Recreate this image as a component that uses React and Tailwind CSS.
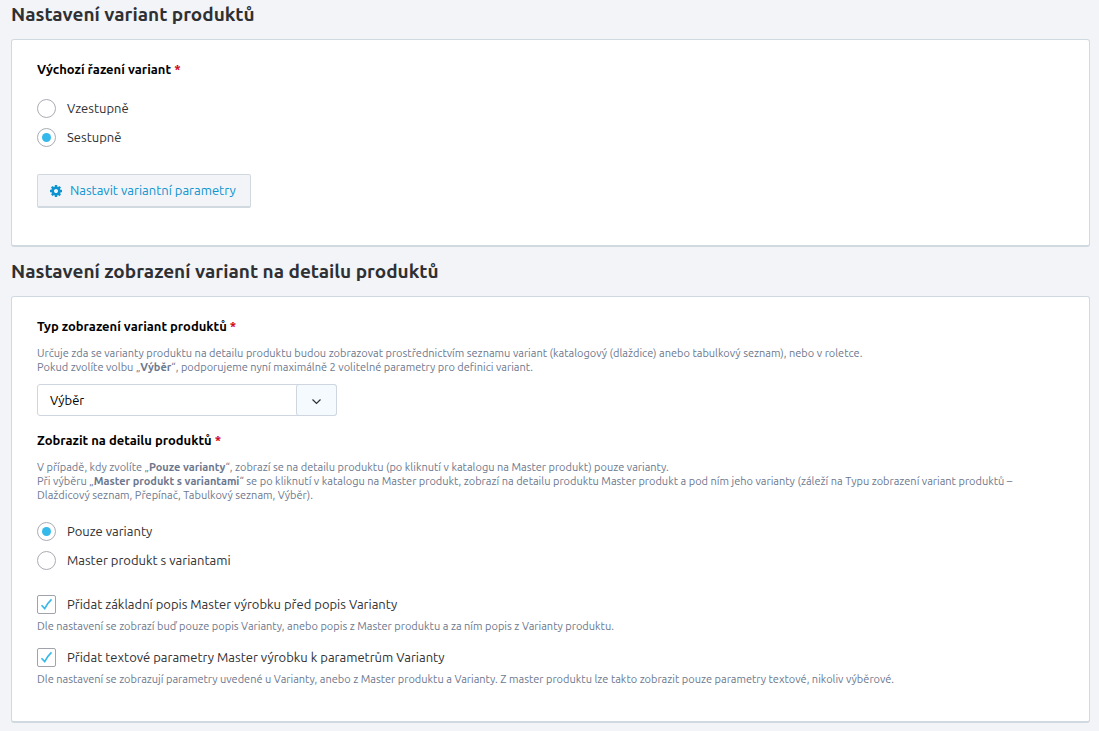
import React, { useState } from 'react';

const GearIcon = () => (
  <svg className="size-3 shrink-0 fill-[#0b94cf]" viewBox="0 128 1536 1536" aria-hidden="true">
    <path d="M1024 896q0-106-75-181t-181-75-181 75-75 181 75 181 181 75 181-75 75-181zm512-109v222q0 12-8 23t-20 13l-185 28q-19 54-39 91 35 50 107 138 10 12 10 25t-9 23q-27 37-99 108t-94 71q-12 0-26-9l-138-108q-44 23-91 38-16 136-29 186-7 28-36 28h-222q-14 0-24.5-8.5t-11.5-21.5l-28-184q-49-16-90-37l-141 107q-10 9-25 9-14 0-25-11-126-114-165-168-7-10-7-23 0-12 8-23 15-21 51-66.5t54-70.5q-27-50-41-99l-183-27q-13-2-21-12.5t-8-23.5v-222q0-12 8-23t19-13l186-28q14-46 39-92-40-57-107-138-10-12-10-24 0-10 9-23 26-36 98.5-107.5t94.5-71.5q13 0 26 10l138 107q44-23 91-38 16-136 29-186 7-28 36-28h222q14 0 24.5 8.5t11.5 21.5l28 184q49 16 90 37l142-107q9-9 24-9 13 0 25 10 129 119 165 170 7 8 7 22 0 12-8 23-15 21-51 66.5t-54 70.5q26 50 41 98l183 28q13 2 21 12.5t8 23.5z" />
  </svg>
);

const Section = ({ title, children }) => (
  <section>
    <h2 className="text-[19px] leading-7 font-semibold text-[#2f3033]">{title}</h2>
    <div className="mt-[11px] rounded-[3px] border border-b-2 border-[#d1d9e0] bg-white px-[25px] pt-5">
      {children}
    </div>
  </section>
);

const Required = () => <span className="text-[#d0021b]">*</span>;

const Hint = ({ id, children }) => (
  <p id={id} className="text-[11px] leading-[14px] text-[#6c788e]">{children}</p>
);

const Radio = ({ name, label, checked, onChange }) => (
  <label className="flex h-[19px] items-center gap-[11px]">
    <span className="grid size-[19px] shrink-0 place-items-center">
      <input
        type="radio"
        name={name}
        checked={checked}
        onChange={onChange}
        className="peer col-start-1 row-start-1 size-[19px] appearance-none rounded-full border border-[#a9acb3] bg-white"
      />
      <span className="pointer-events-none col-start-1 row-start-1 hidden size-[9px] rounded-full bg-[#35b8ea] peer-checked:block" />
    </span>
    {label}
  </label>
);

const Checkbox = ({ label, checked, onChange, hintId }) => (
  <label className="flex h-[19px] items-center gap-[11px]">
    <span className="grid size-[19px] shrink-0 place-items-center">
      <input
        type="checkbox"
        checked={checked}
        onChange={onChange}
        aria-describedby={hintId}
        className="peer col-start-1 row-start-1 size-[19px] appearance-none rounded-[2px] border border-[#a0a3ab] bg-white"
      />
      <svg
        className="pointer-events-none col-start-1 row-start-1 hidden size-[13px] peer-checked:block"
        viewBox="0 0 13 13"
        fill="none"
        stroke="#35b8ea"
        strokeWidth="1.6"
        aria-hidden="true"
      >
        <path d="M1.5 7.2L4.7 10.6C6.2 7.4 8.3 4.4 11.5 1.4" />
      </svg>
    </span>
    {label}
  </label>
);

const App = () => {
  const [order, setOrder] = useState('desc');
  const [display, setDisplay] = useState('variants');
  const [addDescription, setAddDescription] = useState(true);
  const [addParams, setAddParams] = useState(true);

  return (
    <div className="min-h-screen bg-[#f3f4f8] pr-[9px] pb-[9px] pl-[11px] font-['Ubuntu','Noto_Sans',sans-serif] text-[13px] leading-[19px] text-[#2f3033]">
      <Section title="Nastavení variant produktů">
        <fieldset>
          <legend className="font-bold text-black">Výchozí řazení variant <Required /></legend>
          <div className="flex flex-col gap-[10px] pt-5">
            <Radio name="order" label="Vzestupně" checked={order === 'asc'} onChange={() => setOrder('asc')} />
            <Radio name="order" label="Sestupně" checked={order === 'desc'} onChange={() => setOrder('desc')} />
          </div>
        </fieldset>
        <button
          type="button"
          className="mt-[27px] mb-[37px] flex h-[34px] items-center gap-2 rounded-[2px] border border-b-2 border-[#d1d9e0] bg-[#f3f4f8] pr-3.5 pl-3 text-[#0b94cf]"
        >
          <GearIcon />
          Nastavit variantní parametry
        </button>
      </Section>

      <div className="pt-[10px]">
        <Section title="Nastavení zobrazení variant na detailu produktů">
          <label htmlFor="variant-type" className="block font-bold text-black">
            Typ zobrazení variant produktů <Required />
          </label>
          <div className="pt-[10px] pb-[10px]">
            <Hint id="variant-type-hint">
              Určuje zda se varianty produktu na detailu produktu budou zobrazovat prostřednictvím seznamu variant (katalogový (dlaždice) anebo tabulkový seznam), nebo v roletce.
              <br />
              Pokud zvolíte volbu „<b>Výběr</b>“, podporujeme nyní maximálně 2 volitelné parametry pro definici variant.
            </Hint>
          </div>
          <div className="grid h-8 w-[300px] max-w-full">
            <select
              id="variant-type"
              aria-describedby="variant-type-hint"
              className="col-start-1 row-start-1 appearance-none rounded-[3px] border border-[#cfd6e0] bg-white pr-12 pl-3 text-black"
            >
              <option>Výběr</option>
              <option>Dlaždicový seznam</option>
              <option>Přepínač</option>
              <option>Tabulkový seznam</option>
            </select>
            <span className="pointer-events-none col-start-1 row-start-1 flex w-[41px] items-center justify-center justify-self-end rounded-[3px] border border-[#cfd6e0] bg-[#f4fafd]">
              <svg className="size-[9px]" viewBox="0 0 9 9" fill="none" stroke="#2f3033" strokeWidth="1.2" aria-hidden="true">
                <path d="M.5 3.5L4.5 7.5L8.5 3.5" />
              </svg>
            </span>
          </div>

          <fieldset className="pt-[15px]">
            <legend className="contents font-bold text-black">Zobrazit na detailu produktů <Required /></legend>
            <div className="pt-[10px]">
              <Hint>
                V případě, kdy zvolíte „<b>Pouze varianty</b>“, zobrazí se na detailu produktu (po kliknutí v katalogu na Master produkt) pouze varianty.
                <br />
                Při výběru „<b>Master produkt s variantami</b>“ se po kliknutí v katalogu na Master produkt, zobrazí na detailu produktu Master produkt a pod ním jeho varianty (záleží na Typu zobrazení variant produktů – Dlaždicový seznam, Přepínač, Tabulkový seznam, Výběr).
              </Hint>
            </div>
            <div className="flex flex-col gap-[10px] pt-5">
              <Radio name="display" label="Pouze varianty" checked={display === 'variants'} onChange={() => setDisplay('variants')} />
              <Radio name="display" label="Master produkt s variantami" checked={display === 'master'} onChange={() => setDisplay('master')} />
            </div>
          </fieldset>

          <div className="flex flex-col gap-[15px] pt-[25px] pb-[35px]">
            <div className="flex flex-col gap-[5px]">
              <Checkbox
                label="Přidat základní popis Master výrobku před popis Varianty"
                hintId="description-hint"
                checked={addDescription}
                onChange={(e) => setAddDescription(e.target.checked)}
              />
              <Hint id="description-hint">
                Dle nastavení se zobrazí buď pouze popis Varianty, anebo popis z Master produktu a za ním popis z Varianty produktu.
              </Hint>
            </div>
            <div className="flex flex-col gap-[5px]">
              <Checkbox
                label="Přidat textové parametry Master výrobku k parametrům Varianty"
                hintId="params-hint"
                checked={addParams}
                onChange={(e) => setAddParams(e.target.checked)}
              />
              <Hint id="params-hint">
                Dle nastavení se zobrazují parametry uvedené u Varianty, anebo z Master produktu a Varianty. Z master produktu lze takto zobrazit pouze parametry textové, nikoliv výběrové.
              </Hint>
            </div>
          </div>
        </Section>
      </div>
    </div>
  );
};

export default App;
